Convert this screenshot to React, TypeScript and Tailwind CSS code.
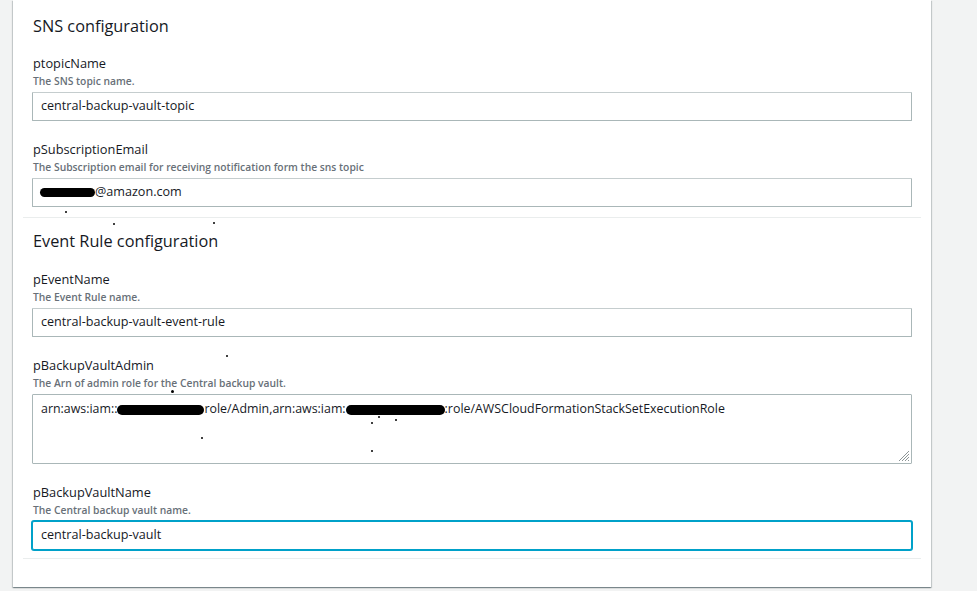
import React from "react";

const font = { fontFamily: '"Open Sans", "Noto Sans", sans-serif' };

function Blob({ w, h = 10, className = "" }: { w: number; h?: number; className?: string }) {
  return (
    <span
      className={"inline-block bg-black rounded-full align-middle " + className}
      style={{ width: w, height: h }}
    />
  );
}

function Field({
  label,
  desc,
  children,
}: {
  label: string;
  desc: string;
  children: React.ReactNode;
}) {
  return (
    <div className="flex flex-col">
      <div className="text-[12.8px] leading-[20px] text-[#16191f]">{label}</div>
      <div className="text-[10.3px] leading-[16px] font-semibold text-[#687078]">{desc}</div>
      <div className="mt-[3px] -ml-px">{children}</div>
    </div>
  );
}

function Input({ children, focused = false }: { children: React.ReactNode; focused?: boolean }) {
  return (
    <div
      className={
        "h-[29px] w-[880px] flex items-center px-[8px] bg-white text-[12.6px] text-[#16191f] " +
        (focused
          ? "border border-[#00a1c9] shadow-[0_0_0_1px_#00a1c9] rounded-[2px]"
          : "border border-[#aab7b8] border-t-[#c5cdce] rounded-[1px]")
      }
    >
      {children}
    </div>
  );
}

export default function App() {
  return (
    <div className="w-[977px] h-[591px] bg-[#f2f3f3] overflow-hidden flex items-start" style={font}>
      <div className="ml-[13px] w-[918px] bg-white shadow-[0_1px_1px_0_rgba(0,28,36,0.3),1px_1px_1px_0_rgba(0,28,36,0.15),-1px_1px_1px_0_rgba(0,28,36,0.15)] px-[10px] pb-[28px]">
        {/* SNS section */}
        <div className="border-b border-[#eaeded] px-[10px] pt-[15px] pb-[10px]">
          <div className="text-[16.3px] leading-[22px] text-[#16191f]">SNS configuration</div>
          <div className="mt-[16px] flex flex-col gap-[18px]">
            <Field label="ptopicName" desc="The SNS topic name.">
              <Input>central-backup-vault-topic</Input>
            </Field>
            <Field
              label="pSubscriptionEmail"
              desc="The Subscription email for receiving notification form the sns topic"
            >
              <Input>
                <Blob w={55} h={9} className="-ml-[1px]" />
                <span>@amazon.com</span>
              </Input>
            </Field>
          </div>
        </div>
        {/* Event Rule section */}
        <div className="relative border-b border-[#eaeded] px-[10px] pt-[12px] pb-[8px]">
          <span className="absolute left-[42px] top-[-7px] w-[2px] h-[2px] bg-black rounded-full" />
          <span className="absolute left-[90px] top-[5px] w-[2px] h-[2px] bg-black rounded-full" />
          <span className="absolute left-[190px] top-[4px] w-[2px] h-[2px] bg-black rounded-full" />
          <div className="text-[16.3px] leading-[22px] text-[#16191f]">Event Rule configuration</div>
          <div className="mt-[17px] flex flex-col gap-[18px]">
            <Field label="pEventName" desc="The Event Rule name.">
              <Input>central-backup-vault-event-rule</Input>
            </Field>
            <div className="relative">
              <span className="absolute left-[193px] top-[0px] w-[2px] h-[2px] bg-black rounded-full" />
              <span className="absolute left-[138px] top-[35px] w-[3px] h-[3px] bg-black rounded-full" />
              <Field label="pBackupVaultAdmin" desc="The Arn of admin role for the Central backup vault.">
                <div className="relative h-[70px] w-[880px] border border-[#aab7b8] rounded-[1px] px-[8px] pt-[5px] text-[12.4px] leading-[18px] text-[#16191f] bg-white">
                  <span>arn:aws:iam::</span>
                  <Blob w={87} />
                  <span>role/Admin,arn:aws:iam:</span>
                  <Blob w={99} />
                  <span>:role/AWSCloudFormationStackSetExecutionRole</span>
                  <span className="absolute left-[168px] top-[42px] w-[2px] h-[2px] bg-black rounded-full" />
                  <span className="absolute left-[338px] top-[27px] w-[2px] h-[2px] bg-black rounded-full" />
                  <span className="absolute left-[345px] top-[21px] w-[2px] h-[2px] bg-black rounded-full" />
                  <span className="absolute left-[362px] top-[24px] w-[2px] h-[2px] bg-black rounded-full" />
                  <span className="absolute left-[338px] top-[55px] w-[2px] h-[2px] bg-black rounded-full" />
                  <svg className="absolute right-[1px] bottom-[1px]" width="12" height="12" viewBox="0 0 12 12">
                    <g stroke="#8d9596" strokeWidth="1">
                      <line x1="11" y1="1" x2="1" y2="11" />
                      <line x1="11" y1="4" x2="4" y2="11" />
                      <line x1="11" y1="7" x2="7" y2="11" />
                      <line x1="11" y1="10" x2="10" y2="11" />
                    </g>
                  </svg>
                </div>
              </Field>
            </div>
            <Field label="pBackupVaultName" desc="The Central backup vault name.">
              <Input focused>central-backup-vault</Input>
            </Field>
          </div>
        </div>
      </div>
    </div>
  );
}
